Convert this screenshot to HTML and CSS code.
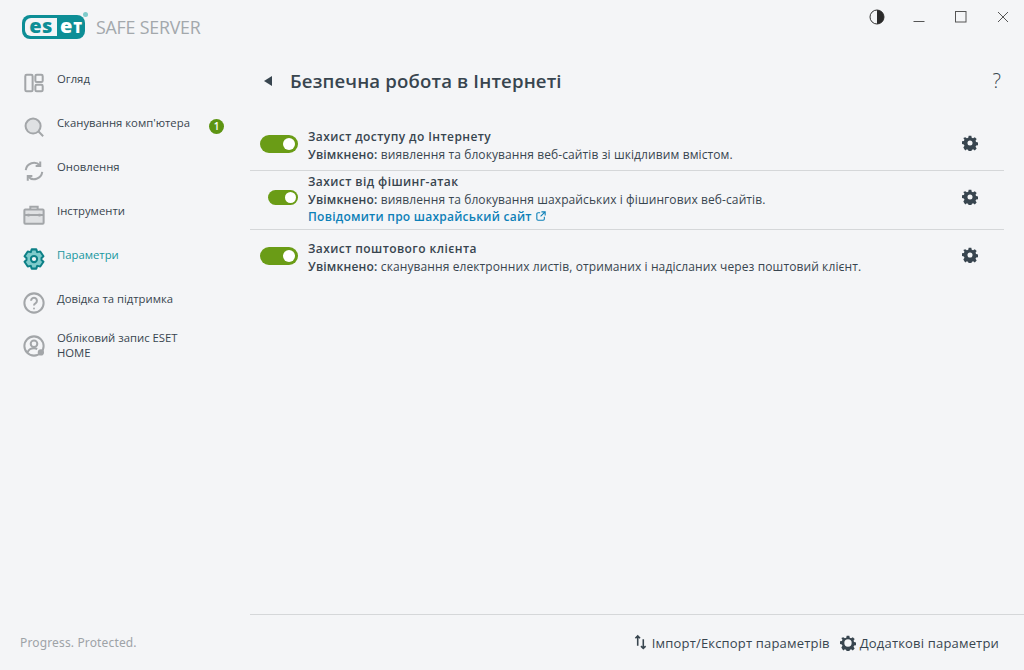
FILE: index.html
```html
<!DOCTYPE html>
<html lang="uk">
<head>
<meta charset="utf-8">
<title>ESET Safe Server</title>
<link rel="stylesheet" href="styles.css">
</head>
<body>
<div class="app">
  <aside class="sidebar">
    <div class="brand">
      <div class="logo"><span class="logo-es">es</span><span class="logo-et">e<small>T</small></span><span class="logo-reg"></span></div>
      <span class="product">SAFE SERVER</span>
    </div>
    <nav class="nav">
      <a class="nav-item">
        <svg class="nav-icon" viewBox="0 0 24 24"><rect x="2.5" y="3" width="8" height="18" rx="1.5"/><rect x="13.5" y="3" width="8" height="8" rx="1.5"/><rect x="13.5" y="14" width="8" height="7" rx="1.5"/></svg>
        <span class="nav-label">Огляд</span>
      </a>
      <a class="nav-item">
        <svg class="nav-icon" viewBox="0 0 24 24"><circle cx="11" cy="11" r="8.2" fill="#dfe1e3"/><path d="M17 17l5 5"/></svg>
        <span class="nav-label">Сканування комп'ютера</span>
        <span class="badge">1</span>
      </a>
      <a class="nav-item">
        <svg class="nav-icon" viewBox="0 0 24 24"><path d="M3 11a9 9 0 0 1 15.5-5"/><path d="M18.8 1.5v5h-5"/><path d="M21 13a9 9 0 0 1-15.5 5"/><path d="M5.2 22.5v-5h5"/></svg>
        <span class="nav-label">Оновлення</span>
      </a>
      <a class="nav-item">
        <svg class="nav-icon" viewBox="0 0 24 24"><rect x="1.5" y="6" width="21" height="15.5" rx="1" fill="#dfe1e3"/><path d="M8 6V3h8v3M1.5 12h21M6 10.5v3M18 10.5v3"/></svg>
        <span class="nav-label">Інструменти</span>
      </a>
      <a class="nav-item active">
        <svg class="nav-icon" viewBox="0 0 24 24"><path d="M9.5 1.5H14.5L15.5 4.500 18.8 3.800 22.3 9 20.2 11V13L22.3 15 18.8 20.2 15.5 19.5 14.5 22.5H9.5L8.5 19.5 5.2 20.2 1.7 15 3.800 13V11L1.700 9 5.200 3.800 8.500 4.500Z" fill="#7fcbcb" stroke-linejoin="round"/><circle cx="12" cy="12" r="3.4" fill="#f4f5f7"/></svg>
        <span class="nav-label">Параметри</span>
      </a>
      <a class="nav-item">
        <svg class="nav-icon" viewBox="0 0 24 24"><circle cx="12" cy="12" r="10.5"/><path d="M8.800 9.500a3.200 3.200 0 1 1 4.800 2.800c-1 .6-1.600 1.200-1.600 2.400"/><circle class="dot" cx="12" cy="18" r="1"/></svg>
        <span class="nav-label">Довідка та підтримка</span>
      </a>
      <a class="nav-item multi">
        <svg class="nav-icon" viewBox="0 0 24 24"><circle cx="12" cy="12" r="10.5"/><circle cx="12" cy="9.5" r="3.6"/><path d="M5 19c1-3 3.500-4.500 7-4.500 1.500 0 2.500.3 3.500.8"/><circle class="dot" cx="19.5" cy="19" r="3.4"/></svg>
        <span class="nav-label">Обліковий запис ESET HOME</span>
      </a>
    </nav>
    <div class="tagline">Progress. Protected.</div>
  </aside>

  <main class="main">
    <div class="window-bar">
      <svg class="win-contrast" viewBox="0 0 16 16"><circle cx="8" cy="8" r="7" class="wc-ring"/><path d="M8 1a7 7 0 0 1 0 14z" class="wc-fill"/></svg>
      <svg class="win-btn" viewBox="0 0 12 12"><path d="M.5 10.500h11"/></svg>
      <svg class="win-btn" viewBox="0 0 12 12"><rect x=".5" y=".5" width="10.5" height="10.5"/></svg>
      <svg class="win-btn" viewBox="0 0 12 12"><path d="M1 1l10 10M11 1L1 11"/></svg>
    </div>
    <header class="page-head">
      <span class="back"></span>
      <h1 class="title">Безпечна робота в Інтернеті</h1>
      <span class="help">?</span>
    </header>
    <section class="rows">
      <div class="row row-one">
        <div class="toggle-cell"><span class="toggle"></span></div>
        <div class="row-text">
          <div class="row-title">Захист доступу до Інтернету</div>
          <div class="row-desc"><b>Увімкнено:</b> виявлення та блокування веб-сайтів зі шкідливим вмістом.</div>
        </div>
        <svg class="gear" viewBox="0 0 24 24"><path fill-rule="evenodd" d="M10 1h4l.6 3 2 .9 2.600-1.700 2.800 2.800-1.700 2.600.9 2 3 .6v4l-3 .6-.9 2 1.700 2.600-2.800 2.800-2.600-1.700-2 .9-.6 3h-4l-.6-3-2-.9-2.600 1.700L2 18.800l1.700-2.600-.9-2-3-.6v-4l3-.6.9-2L2 4.400 4.800 3.200 7.400 4.900l2-.9zM12 8.200a3.800 3.800 0 1 0 0 7.600 3.800 3.800 0 0 0 0-7.600z"/></svg>
      </div>
      <div class="row row-two">
        <div class="toggle-cell"><span class="toggle small"></span></div>
        <div class="row-text">
          <div class="row-title">Захист від фішинг-атак</div>
          <div class="row-desc"><b>Увімкнено:</b> виявлення та блокування шахрайських і фішингових веб-сайтів.</div>
          <a class="row-link">Повідомити про шахрайський сайт <svg class="ext" viewBox="0 0 12 12"><path d="M5 2H2.500A1.500 1.500 0 0 0 1 3.500v6A1.500 1.500 0 0 0 2.500 11h6A1.500 1.500 0 0 0 10 9.500V7M6.500 1H11v4.500M11 1L5.500 6.500"/></svg></a>
        </div>
        <svg class="gear" viewBox="0 0 24 24"><path fill-rule="evenodd" d="M10 1h4l.6 3 2 .9 2.600-1.700 2.800 2.800-1.700 2.600.9 2 3 .6v4l-3 .6-.9 2 1.700 2.600-2.800 2.800-2.600-1.700-2 .9-.6 3h-4l-.6-3-2-.9-2.600 1.700L2 18.800l1.700-2.600-.9-2-3-.6v-4l3-.6.9-2L2 4.400 4.800 3.200 7.400 4.900l2-.9zM12 8.200a3.800 3.800 0 1 0 0 7.600 3.800 3.800 0 0 0 0-7.600z"/></svg>
      </div>
      <div class="row row-three">
        <div class="toggle-cell"><span class="toggle"></span></div>
        <div class="row-text">
          <div class="row-title">Захист поштового клієнта</div>
          <div class="row-desc"><b>Увімкнено:</b> сканування електронних листів, отриманих і надісланих через поштовий клієнт.</div>
        </div>
        <svg class="gear" viewBox="0 0 24 24"><path fill-rule="evenodd" d="M10 1h4l.6 3 2 .9 2.600-1.700 2.800 2.800-1.700 2.600.9 2 3 .6v4l-3 .6-.9 2 1.700 2.600-2.800 2.800-2.600-1.700-2 .9-.6 3h-4l-.6-3-2-.9-2.600 1.700L2 18.800l1.700-2.600-.9-2-3-.6v-4l3-.6.9-2L2 4.400 4.800 3.200 7.400 4.900l2-.9zM12 8.200a3.800 3.800 0 1 0 0 7.600 3.800 3.800 0 0 0 0-7.600z"/></svg>
      </div>
    </section>
    <footer class="actions">
      <a class="action">
        <svg class="arrows" viewBox="0 0 14 16"><path d="M4 12V1.500M1.500 4L4 1.500 6.500 4M10 5v10M7.500 12.500L10 15l2.500-2.500"/></svg>
        <span>Імпорт/Експорт параметрів</span>
      </a>
      <a class="action">
        <svg class="gear-outline" viewBox="0 0 24 24"><path fill-rule="evenodd" d="M10 1h4l.6 3 2 .9 2.600-1.700 2.800 2.800-1.700 2.600.9 2 3 .6v4l-3 .6-.9 2 1.700 2.600-2.800 2.800-2.600-1.700-2 .9-.6 3h-4l-.6-3-2-.9-2.600 1.700L2 18.800l1.700-2.600-.9-2-3-.6v-4l3-.6.9-2L2 4.400 4.800 3.200 7.400 4.900l2-.9zM12 6.500a5.500 5.500 0 1 0 0 11 5.500 5.500 0 0 0 0-11z"/></svg>
        <span>Додаткові параметри</span>
      </a>
    </footer>
  </main>
</div>
</body>
</html>
```
FILE: styles.css
```css
* { box-sizing: border-box; }
html, body { margin: 0; height: 100%; }
body {
  background: #f4f5f7;
  color: #38454f;
  font-family: "Open Sans", "Noto Sans", sans-serif;
  font-size: 12px;
  overflow: hidden;
}
.app { display: flex; width: 1024px; height: 670px; }

/* Sidebar */
.sidebar { width: 250px; display: flex; flex-direction: column; flex: none; }
.brand { display: flex; gap: 11px; padding: 15px 0 0 22px; height: 57px; align-items: flex-start; }
.logo {
  position: relative;
  display: flex;
  align-items: center;
  width: 63px;
  height: 24px;
  background: #0d8e96;
  border-radius: 8px;
  padding-left: 3px;
  font-family: "Open Sans", sans-serif;
  font-weight: 800;
  font-size: 20px;
}
.logo-es { background: #f4f5f7; color: #0d8e96; border-radius: 6px 0 0 6px; height: 18px; width: 32px; text-align: center; line-height: 15px; letter-spacing: .3px; }
.logo-et { color: #fff; width: 28px; text-align: center; line-height: 16px; height: 18px; }
.logo-et small { font-size: 15px; margin-left: 1px; }
.logo-reg { position: absolute; right: -3px; top: -3px; width: 5px; height: 5px; border-radius: 50%; background: #7fcbcb; }
.product { font-size: 17.8px; color: #a3a8ac; line-height: 24px; letter-spacing: -.2px; }

.nav { display: flex; flex-direction: column; flex: 1; }
.nav-item { display: flex; align-items: center; height: 44px; padding-left: 23px; position: relative; color: #38454f; }
.nav-icon { width: 22px; height: 22px; flex: none; fill: none; stroke: #a3a6a9; stroke-width: 2.2; margin-top: 7px; }
.nav-icon .dot { fill: #a3a6a9; stroke: none; }
.nav-label { margin-left: 12px; width: 130px; line-height: 15px; font-size: 11.3px; margin-top: -2px; }
.nav-item:nth-child(2) .nav-label { width: 145px; white-space: nowrap; }
.nav-item.multi { align-items: flex-start; padding-top: 10px; }
.nav-item.multi .nav-label { margin-top: 0; width: 135px; line-height: 14.5px; }
.nav-item.multi .nav-icon { margin-top: 4px; }
.nav-item.active { color: #17979f; }
.nav-item.active .nav-icon { stroke: #0d8087; }
.badge {
  position: absolute;
  left: 209px;
  top: 18px;
  width: 15px;
  height: 15px;
  border-radius: 50%;
  background: #5d9412;
  color: #fff;
  font-size: 10px;
  font-weight: 600;
  line-height: 15px;
  text-align: center;
}
.tagline { color: #9ea3a7; font-size: 12px; padding: 0 0 19px 20px; letter-spacing: .15px; line-height: 16px; font-family: "Noto Sans", sans-serif; }

/* Main */
.main { flex: 1; display: flex; flex-direction: column; min-width: 0; }
.window-bar { display: flex; justify-content: flex-end; align-items: center; height: 34px; padding-right: 15px; gap: 30px; }
.win-btn { width: 12px; height: 12px; fill: none; stroke: #555; stroke-width: 1; }
.win-contrast { width: 16px; height: 16px; margin-right: -2px; }
.wc-ring { fill: none; stroke: #333; stroke-width: 1; }
.wc-fill { fill: #2a2a2a; }

.page-head { display: flex; align-items: center; height: 60px; margin-top: 17px; padding: 0 23px 0 14px; }
.back { width: 0; height: 0; border: 5px solid transparent; border-right: 8px solid #38454f; border-left: 0; margin-right: 18px; }
.title { margin: 0; font-size: 18.6px; font-weight: 600; color: #38454f; flex: 1; line-height: 24px; letter-spacing: .15px; }
.help { font-size: 20px; font-weight: 300; color: #38454f; line-height: 24px; }

.rows { padding: 0 20px 0 0; margin-top: 11px; flex: 1; }
.row { display: flex; align-items: center; border-bottom: 1px solid #d5d7d9; }
.row-one { height: 49px; }
.row-two { height: 59px; }
.row-two .row-text { margin-bottom: 2px; }
.row-three { border-bottom: 0; height: 56px; }
.toggle-cell { width: 48px; display: flex; justify-content: flex-end; flex: none; margin-bottom: 4px; }
.row-two .toggle-cell { margin-bottom: 6px; }
.toggle { display: block; position: relative; width: 38px; height: 18px; border-radius: 9px; background: #6a9c16; }
.toggle::after { content: ""; position: absolute; right: 3px; top: 3px; width: 12px; height: 12px; border-radius: 50%; background: #fff; }
.toggle.small { width: 30px; height: 15px; border-radius: 8px; }
.toggle.small::after { width: 11px; height: 11px; top: 2px; right: 2px; }
.row-text { flex: 1; margin-left: 10px; min-width: 0; }
.row-title { font-weight: 600; font-size: 12px; line-height: 18px; color: #38454f; letter-spacing: .42px; }
.row-desc { font-size: 12px; line-height: 18px; letter-spacing: .1px; }
.row-desc b { font-weight: 600; letter-spacing: .2px; }
.row-link { display: block; color: #0d80b8; font-weight: 600; font-size: 12px; line-height: 17px; margin-top: -1px; letter-spacing: .25px; }
.ext { width: 10px; height: 10px; fill: none; stroke: #0d80b8; stroke-width: 1.3; margin-left: 1px; }
.gear { width: 16px; height: 16px; fill: #38454f; margin: 0 26px 6px 0; flex: none; }

.actions {
  height: 56px;
  border-top: 1px solid #d5d7d9;
  display: flex;
  justify-content: flex-end;
  align-items: center;
  gap: 10px;
  padding-right: 25px;
  font-size: 13px;
  font-weight: 500;
  letter-spacing: .18px;
  color: #38454f;
}
.action { display: flex; align-items: center; gap: 5px; }
.arrows { width: 13px; height: 16px; fill: none; stroke: #38454f; stroke-width: 1.7; margin-bottom: 2px; }
.gear-outline { width: 16px; height: 16px; fill: #38454f; margin-right: -1px; }
```
